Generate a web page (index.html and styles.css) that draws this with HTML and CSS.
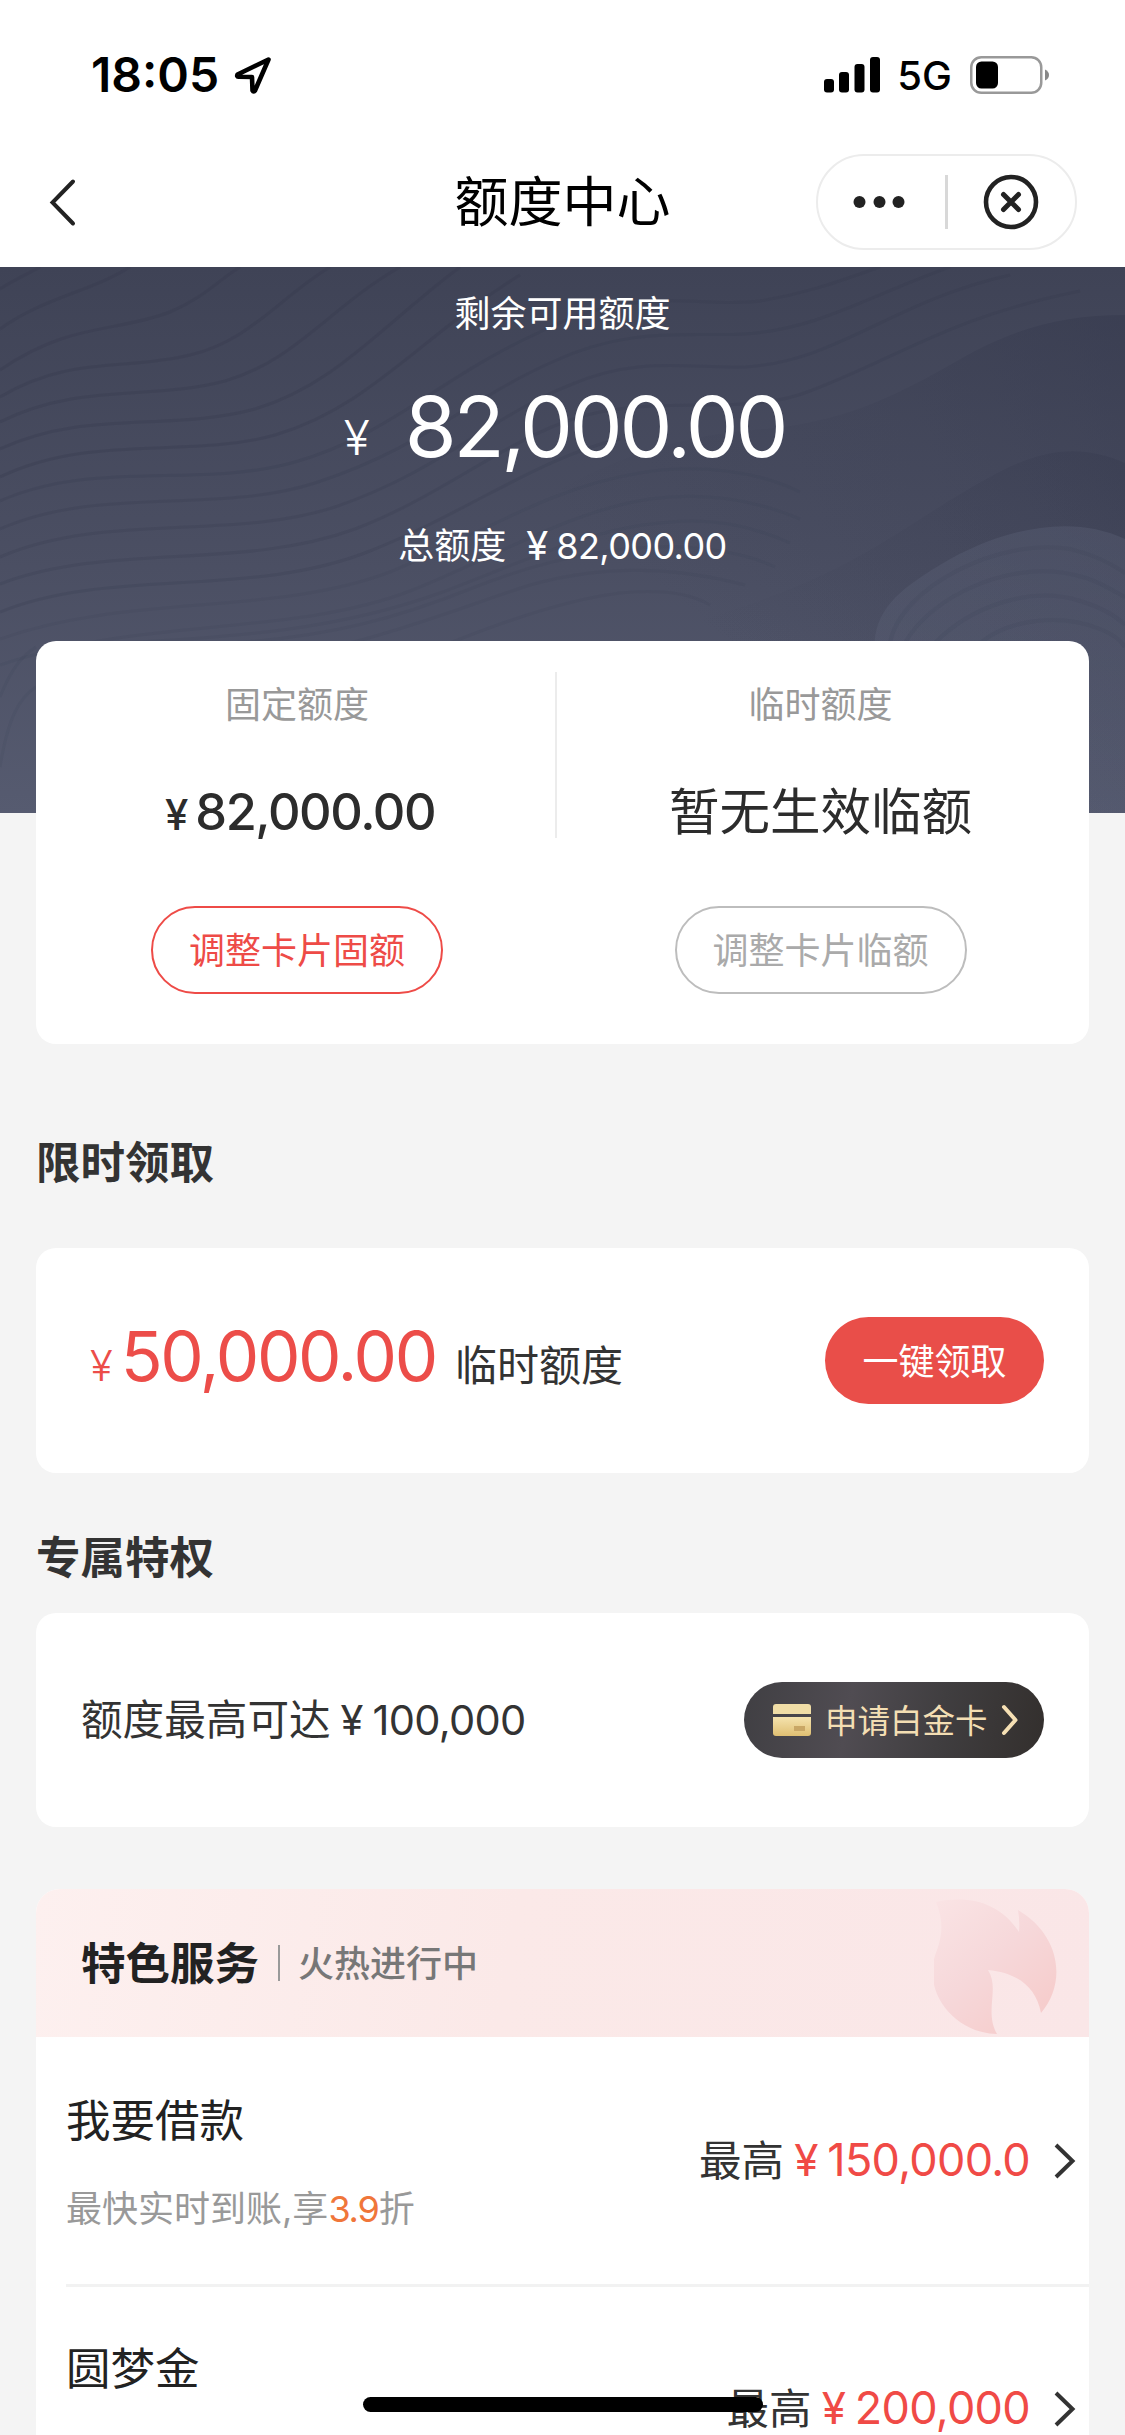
FILE: index.html
```html
<!DOCTYPE html>
<html lang="zh-CN">
<head>
<meta charset="utf-8">
<title>额度中心</title>
<link rel="stylesheet" href="styles.css">
</head>
<body>
<div class="screen">
  <header class="top">
    <div class="status">
      <div class="status-left">
        <span class="clock">18:05</span>
        <svg class="loc" width="38" height="39" viewBox="0 0 38 39"><path d="M34.5 3.5 L3.500 18.500 Q2.500 20.500 4.500 20.800 L18 21 L18.500 34.500 Q19.500 36.500 21 34.500 Z" fill="none" stroke="#000" stroke-width="4.6" stroke-linejoin="round"/></svg>
      </div>
      <div class="status-right">
        <svg width="56" height="36" viewBox="0 0 56 36"><rect x="0" y="22" width="10" height="13.500" rx="3"/><rect x="15" y="15" width="10" height="20.500" rx="3"/><rect x="30.500" y="7" width="10" height="28.500" rx="3"/><rect x="46" y="0" width="10" height="35.500" rx="3"/></svg>
        <span class="net">5G</span>
        <svg width="80" height="38" viewBox="0 0 80 38"><rect x="1.250" y="1.250" width="70" height="35.500" rx="10" fill="#fff" stroke="#999" stroke-width="2.500"/><rect x="6" y="5.500" width="22" height="27" rx="5.500"/><path d="M75 13.500 Q79 15.500 79 19 Q79 22.500 75 24.500Z" fill="#888"/></svg>
      </div>
    </div>
    <div class="nav">
      <svg class="back" width="27" height="49" viewBox="0 0 27 49"><path d="M24 3.500 L3.500 24.500 L24 45.500" fill="none" stroke="#222" stroke-width="4" stroke-linecap="round"/></svg>
      <h1 class="title">额度中心</h1>
      <div class="capsule">
        <svg width="52" height="14" viewBox="0 0 52 14" fill="#222"><circle cx="6.500" cy="7" r="6"/><circle cx="26.500" cy="7" r="6"/><circle cx="45.500" cy="7" r="6"/></svg>
        <span class="capsule-line"></span>
        <svg width="56" height="56" viewBox="0 0 56 56" fill="none" stroke="#222"><circle cx="28" cy="28" r="25" stroke-width="4.600"/><path d="M20.500 20.500 L35.500 35.500 M35.500 20.500 L20.500 35.500" stroke-width="5" stroke-linecap="round"/></svg>
      </div>
    </div>
  </header>

  <section class="hero">
    <svg class="waves" width="1125" height="546" viewBox="0 0 1125 546" fill="none">
      <defs>
        <linearGradient id="hill" x1="1" y1="0" x2=".35" y2=".65"><stop offset="0" stop-color="#363a4e" stop-opacity=".55"/><stop offset=".45" stop-color="#3a3e52" stop-opacity=".25"/><stop offset="1" stop-color="#3a3e52" stop-opacity="0"/></linearGradient>
        <linearGradient id="knoll" x1="0" y1="0" x2="0" y2="1"><stop offset="0" stop-color="#5d6379" stop-opacity=".35"/><stop offset="1" stop-color="#5d6379" stop-opacity=".25"/></linearGradient>
      </defs>
      <path d="M1125 48 C1060 48 1010 62 950 98 C890 132 840 155 765 162 C680 168 600 190 500 260 V546 H1125Z" fill="url(#hill)"/>
      <path d="M1125 196 C1080 176 1040 182 990 210 C920 248 870 292 780 326 C720 350 670 358 600 390 V546 H1125Z" fill="url(#hill)" opacity=".7"/>
      <path d="M1125 272 C1070 246 1000 262 940 298 C890 328 868 350 876 400 V546 H1125Z" fill="url(#knoll)"/>
      <g stroke="#34384b" stroke-opacity=".3" stroke-width="3">
        <path d="M0 22 C15 12 28 7 40 0"/>
        <path d="M0 62 C45 30 90 25 130 0"/>
        <path d="M0 103 C70 55 115 66 170 45 C205 30 220 12 240 0"/>
        <path d="M0 130 C70 88 125 104 190 88 C250 74 280 30 330 0"/>
        <path d="M0 155 C80 115 150 134 225 114 C295 94 330 40 400 0"/>
        <path d="M0 182 C85 142 170 165 255 142 C335 118 380 60 460 0"/>
        <path d="M0 210 C90 166 190 192 275 168 C370 140 420 70 520 8"/>
      </g>
      <g stroke="#34384b" stroke-opacity=".2" stroke-width="3">
        <path d="M0 234 C95 192 200 222 295 195 C390 168 440 110 540 65 C640 15 700 42 760 34 C810 26 845 12 880 0"/>
        <path d="M0 262 C100 218 215 248 315 216 C420 182 470 132 550 96 C630 58 690 70 745 67 C820 62 870 28 950 0"/>
        <path d="M0 290 C105 245 230 274 335 240 C440 204 490 150 570 118 C640 88 690 102 745 100 C840 94 890 35 1010 8"/>
        <path d="M0 317 C110 275 240 304 355 262 C450 226 520 160 600 145 C680 130 750 148 810 124 C900 90 950 50 1080 24"/>
        <path d="M0 345 C110 300 250 332 370 284 C470 244 540 190 620 172"/>
      </g>
      <g stroke="#34384b" stroke-opacity=".1" stroke-width="3">
        <path d="M0 372 C130 326 270 350 390 305 C480 268 550 220 640 206 C700 196 760 205 800 225"/>
        <path d="M0 398 C140 350 290 370 410 324 C500 288 570 244 650 232 C710 224 760 235 800 252"/>
        <path d="M120 376 C240 370 340 362 440 326 C520 296 590 262 660 256 C710 250 750 258 790 276"/>
        <path d="M230 376 C330 370 400 350 470 322 C540 294 610 278 680 280 C720 282 750 288 775 300"/>
        <path d="M350 376 C420 358 480 334 530 318 C600 298 670 298 745 318"/>
        <path d="M450 376 C510 352 570 332 620 326 C660 322 690 326 710 338"/>
        <path d="M0 430 C10 405 20 390 36 380 M0 500 C8 450 20 430 36 420"/>
      </g>
      <g stroke="#3a3e52" stroke-opacity=".14" stroke-width="4">
        <path d="M890 376 C900 320 1000 270 1070 282 C1095 288 1110 296 1125 306"/>
        <path d="M905 376 C930 330 1010 292 1075 308 C1095 312 1110 322 1125 330"/>
        <path d="M935 376 C970 340 1030 318 1080 334 C1100 340 1115 348 1125 358"/>
        <path d="M980 376 C1010 352 1060 346 1100 362 C1110 366 1120 372 1125 380"/>
      </g>
    </svg>
    <p class="hero-label">剩余可用额度</p>
    <p class="hero-amount"><span class="hero-yen">¥</span><span class="hero-num">82,000.00</span></p>
    <p class="hero-total"><span>总额度</span><span class="yen-mid">¥</span><span class="total-num">82,000.00</span></p>
  </section>

  <main class="content">
    <section class="card quota">
      <div class="quota-col">
        <p class="quota-label">固定额度</p>
        <p class="quota-value fixed"><span class="quota-yen">¥</span><span class="quota-num">82,000.00</span></p>
        <button class="btn-line red">调整卡片固额</button>
      </div>
      <span class="quota-line"></span>
      <div class="quota-col">
        <p class="quota-label">临时额度</p>
        <p class="quota-value">暂无生效临额</p>
        <button class="btn-line gray">调整卡片临额</button>
      </div>
    </section>

    <h2 class="heading first">限时领取</h2>
    <section class="card claim">
      <p class="claim-text"><span class="claim-yen">¥</span><span class="claim-num">50,000.00</span><span class="claim-unit">临时额度</span></p>
      <button class="btn-fill">一键领取</button>
    </section>

    <h2 class="heading second">专属特权</h2>
    <section class="card perk">
      <p class="perk-text"><span>额度最高可达</span><span class="perk-yen">¥</span><span class="perk-num">100,000</span></p>
      <a class="pill">
        <svg width="38" height="32" viewBox="0 0 38 32"><defs><linearGradient id="gold" x1="0" y1="0" x2="0" y2="1"><stop offset="0" stop-color="#f5e3ae"/><stop offset="1" stop-color="#dfbf72"/></linearGradient></defs><path d="M3 0H35Q38 0 38 3V10H0V3Q0 0 3 0Z" fill="#f0dda6"/><path d="M0 13H38V29Q38 32 35 32H3Q0 32 0 29Z" fill="url(#gold)"/><rect x="21" y="22" width="11" height="5" fill="#c9a765"/></svg>
        <span class="pill-text">申请白金卡</span>
        <svg width="18" height="32" viewBox="0 0 18 32"><path d="M3 3 L14.500 16 L3 29" fill="none" stroke="#f6e0b4" stroke-width="4" stroke-linecap="round" stroke-linejoin="round"/></svg>
      </a>
    </section>

    <section class="card services">
      <div class="services-head">
        <h2 class="services-title">特色服务</h2>
        <span class="services-line"></span>
        <span class="services-sub">火热进行中</span>
        <svg class="flame" width="124" height="137" viewBox="0 0 124 137"><defs><linearGradient id="fire" x1="0" y1="0" x2=".8" y2="1"><stop offset="0" stop-color="#fae4e5"/><stop offset=".5" stop-color="#f6d8da"/><stop offset="1" stop-color="#f6cbca"/></linearGradient></defs><path d="M2 3 C36 -4 66 4 85 33 Q86 22 84 11 C125 35 134 82 107 114 C102 88 84 74 54 71 C66 90 50 112 63 135 C20 134 -14 92 3 51 C9 34 9 20 2 3Z" fill="url(#fire)"/></svg>
      </div>
      <div class="service">
        <div class="service-info">
          <h3 class="service-name">我要借款</h3>
          <p class="service-desc">最快实时到账,享<em>3.9</em>折</p>
        </div>
        <p class="service-max"><span>最高</span><span class="service-yen">¥</span><span class="service-num">150,000.0</span></p>
        <svg class="chev" width="22" height="38" viewBox="0 0 22 38"><path d="M2 3 L18.500 19 L2 35" fill="none" stroke="#333" stroke-width="4"/></svg>
      </div>
      <div class="service next">
        <div class="service-info">
          <h3 class="service-name">圆梦金</h3>
        </div>
        <p class="service-max"><span>最高</span><span class="service-yen">¥</span><span class="service-num">200,000</span></p>
        <svg class="chev" width="22" height="38" viewBox="0 0 22 38"><path d="M2 3 L18.500 19 L2 35" fill="none" stroke="#333" stroke-width="4"/></svg>
      </div>
    </section>
  </main>
  <div class="home-bar"></div>
</div>
</body>
</html>
```
FILE: styles.css
```css
* { box-sizing: border-box; margin: 0; padding: 0; }
body { background: #f4f4f4; font-family: "Inter", "Noto Sans CJK SC", sans-serif; color: #333; }
p, h1, h2, h3, span { white-space: nowrap; }
svg { display: block; flex: none; }
button { font-family: inherit; }

.screen { position: relative; width: 1125px; height: 2435px; overflow: hidden; }

.top { height: 267px; background: #fff; }
.status { height: 150px; display: flex; justify-content: space-between; padding: 0 75px 0 91px; }
.status-left { display: flex; align-items: center; gap: 15px; }
.clock { font-size: 48px; font-weight: 600; color: #000; line-height: 60px; }
.status-right { display: flex; align-items: center; }
.net { font-size: 40px; font-weight: 500; color: #000; margin: 2px 18px 0 17px; line-height: 48px; }
.nav { height: 104px; display: grid; grid-template-columns: 1fr auto 1fr; align-items: center; }
.back { margin-left: 49px; }
.title { font-size: 54px; font-weight: 400; color: #000; line-height: 70px; padding-top: 2px; }
.capsule { justify-self: end; margin-right: 48px; width: 261px; height: 96px; border: 2px solid #ececec; border-radius: 48px; display: flex; align-items: center; padding-left: 35px; }
.capsule-line { width: 3px; height: 54px; background: #d8d8d8; margin: 0 35px 0 40px; }

.hero { position: relative; height: 546px; background: linear-gradient(#3f4356, #4b4f63 55%, #565b70); color: #fff; display: flex; flex-direction: column; align-items: center; }
.waves { position: absolute; left: 0; top: 0; }
.hero p { position: relative; }
.hero-label { font-size: 36px; line-height: 50px; margin-top: 22px; }
.hero-amount { display: flex; align-items: baseline; margin-top: 38px; padding-left: 4px; line-height: 100px; }
.hero-yen { font-size: 48px; font-weight: 300; margin-right: 35px; position: relative; top: -2px; }
.hero-num { font-size: 84px; font-weight: 400; letter-spacing: -3.300px; }
.hero-total { display: flex; align-items: center; font-size: 36px; line-height: 50px; margin-top: 31px; }
.yen-mid { margin: 0 8px 0 20px; font-size: 40px; }
.total-num { letter-spacing: -.6px; }

.content { position: relative; margin-top: -172px; padding: 0 36px; display: flex; flex-direction: column; }
.card { background: #fff; border-radius: 20px; }
.quota { height: 403px; display: grid; grid-template-columns: 519px 2px 527px; }
.quota-col { display: flex; flex-direction: column; align-items: center; }
.quota-col:first-child { padding-left: 3px; }
.quota-label { font-size: 36px; line-height: 50px; color: #999; margin-top: 39px; }
.quota-value { font-size: 50.500px; line-height: 70px; height: 70px; margin-top: 47px; color: #2c2c2c; display: flex; align-items: baseline; }
.fixed { padding-left: 6px; }
.quota-yen { font-size: 42px; font-weight: 500; margin-right: 7px; }
.quota-num { font-weight: 550; letter-spacing: -1.400px; }
.quota-line { height: 166px; background: #ececec; margin-top: 31px; }
.btn-line { width: 292px; height: 88px; margin-top: 59px; padding-bottom: 4px; border-radius: 44px; border: 2px solid; background: #fff; font-size: 36px; }
.red { color: #ee4b47; }
.gray { color: #aaa; border-color: #bdbdbd; }

.heading { font-size: 44.500px; font-weight: 600; line-height: 60px; }
.first { margin-top: 89px; }
.second { margin-top: 55px; }
.claim { height: 225px; margin-top: 55px; padding: 0 45px 0 54px; display: flex; align-items: center; justify-content: space-between; }
.claim-text { display: flex; align-items: baseline; color: #ec4d49; margin-top: -10px; }
.claim-yen { font-size: 42px; font-weight: 300; }
.claim-num { font-size: 69px; font-weight: 400; letter-spacing: -2.300px; margin: 0 19px 0 8px; }
.claim-unit { font-size: 42px; color: #333; }
.btn-fill { width: 219px; height: 87px; padding-bottom: 4px; border: 0; border-radius: 44px; background: #e94e49; color: #fff; font-size: 36px; }

.perk { height: 214px; margin-top: 25px; padding: 0 45px 0 45px; display: flex; align-items: center; justify-content: space-between; }
.perk-text { display: flex; align-items: baseline; font-size: 41.600px; margin-top: -6px; }
.perk-yen { margin: 0 9px 0 10px; }
.perk-num { letter-spacing: -.7px; }
.pill { width: 300px; height: 76px; border-radius: 38px; background: linear-gradient(100deg, #403f43, #504c52 35%, #403e40 65%, #332f2d); display: flex; align-items: center; padding-left: 29px; }
.pill-text { font-size: 32.500px; color: #f3deb3; margin: 0 13px 0 14px; padding-bottom: 4px; }

.services { margin-top: 62px; border-radius: 24px 24px 0 0; overflow: hidden; }
.services-head { height: 148px; background: linear-gradient(100deg, #fdf0ef, #fbe9e8 45%, #fae6e7); display: flex; align-items: center; padding-left: 45px; }
.services-title { font-size: 44.500px; font-weight: 700; color: #222; padding-bottom: 5px; }
.services-line { width: 2px; height: 36px; background: #999; margin: 0 18px 0 19px; }
.services-sub { font-size: 36px; font-weight: 500; color: #777; padding-bottom: 4px; }
.flame { margin: 9px 31px 0 auto; }
.service { height: 250px; margin-left: 30px; display: flex; align-items: center; border-bottom: 3px solid #f2f2f2; padding-right: 13px; }
.next { height: 246px; }
.service-info { flex: 1; align-self: stretch; padding-top: 54px; }
.next .service-info { padding-top: 52px; }
.service-name { font-size: 44.500px; font-weight: 400; line-height: 60px; color: #222; }
.service-desc { font-size: 36px; line-height: 50px; color: #999; margin-top: 33px; }
.service-desc em { font-style: normal; color: #f0763a; letter-spacing: -1.200px; }
.service-max { display: flex; align-items: baseline; font-size: 42.500px; margin-top: -6px; }
.service-yen { color: #f04a46; margin: 0 9px 0 10px; font-size: 44px; }
.service-num { font-size: 45px; color: #f04a46; letter-spacing: -.7px; }
.chev { margin-left: 24px; }

.home-bar { position: absolute; left: 363px; top: 2397px; width: 400px; height: 15px; border-radius: 8px; background: #000; }
```
